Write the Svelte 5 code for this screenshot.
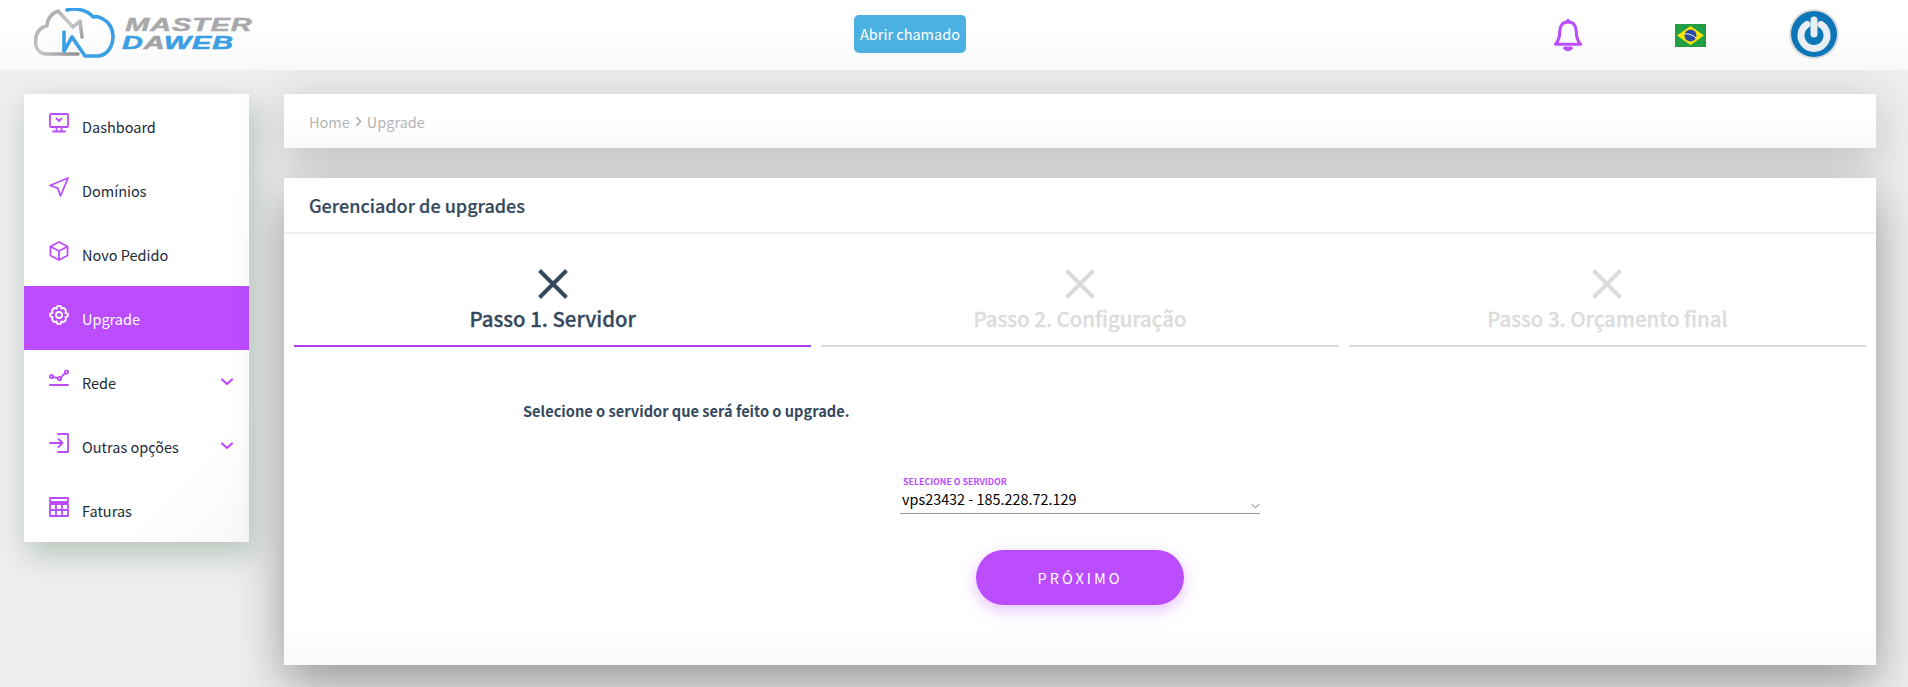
<script>
  const menu = [
    { label: 'Dashboard', icon: 'monitor' },
    { label: 'Domínios', icon: 'send' },
    { label: 'Novo Pedido', icon: 'box' },
    { label: 'Upgrade', icon: 'gear', active: true },
    { label: 'Rede', icon: 'chart', more: true },
    { label: 'Outras opções', icon: 'login', more: true },
    { label: 'Faturas', icon: 'table' }
  ];
  const steps = [
    { label: 'Passo 1. Servidor', active: true },
    { label: 'Passo 2. Configuração' },
    { label: 'Passo 3. Orçamento final' }
  ];
</script>

<div class="page">
  <header class="topbar">
    <div class="logo">
      <svg class="logo-mark" viewBox="0 0 85 52" width="85" height="52" fill="none" stroke-width="3.6" stroke-linecap="round" stroke-linejoin="round">
        <defs>
          <linearGradient id="metal" x1="0" y1="0" x2="1" y2="1">
            <stop offset="0" stop-color="#9d9da0" />
            <stop offset="0.5" stop-color="#c9c9cb" />
            <stop offset="1" stop-color="#8c8c8f" />
          </linearGradient>
        </defs>
        <path d="M44 46 L13 46 C5 46 1.5 40 1.5 33 C1.5 25 6 19 13 18 C13 11 18 5 24 3 L39 19 L46 13 L48 29" stroke="url(#metal)" />
        <path d="M33 2 C40 0 53 1 59 9 C63 8 66 9 69 11 C75 14 79 21 79 28 C79 38 74 47 64 48 L51 48 L38 29 L30 43 L30 24" stroke="#3a9fe4" />
      </svg>
      <div class="logo-text">
        <span class="logo-top">MASTER</span>
        <span class="logo-bottom">D<i>A</i>WEB</span>
      </div>
    </div>

    <button class="ticket">Abrir chamado</button>

    <svg class="bell" viewBox="0 0 30 34" width="30" height="33" fill="none" stroke="#bb4dff" stroke-width="3.2" stroke-linejoin="round" stroke-linecap="round">
      <path d="M15 3 C9 3 6.5 8 6.5 13 C6.5 19 5 23 2 26 L28 26 C25 23 23.5 19 23.5 13 C23.5 8 21 3 15 3 Z" />
      <path d="M15 1.5 L15 3" />
      <path d="M11.5 30 C13 32 17 32 18.5 30 Z" fill="#bb4dff" />
    </svg>

    <svg class="flag" viewBox="0 0 31 23" width="31" height="23">
      <rect width="31" height="23" fill="#229e45" />
      <path d="M15.5 2 L29 11.5 L15.5 21 L2 11.5 Z" fill="#f8e509" />
      <circle cx="15.5" cy="11.5" r="6" fill="#2b49a3" />
      <path d="M9.8 10 C14 9.5 18 11 21 14" stroke="#fff" stroke-width="0.9" fill="none" />
    </svg>

    <div class="avatar">
      <svg viewBox="0 0 50 50" width="50" height="50" fill="none">
        <circle cx="25" cy="25" r="25" fill="#dcdcdc" />
        <circle cx="25" cy="25" r="23" fill="#0d76b8" />
        <path d="M18 15.5 A13 13 0 1 0 32 15.5" stroke="#e9eef2" stroke-width="7" stroke-linecap="round" />
        <path d="M25 11 L25 25" stroke="#e9eef2" stroke-width="7" stroke-linecap="round" />
      </svg>
    </div>
  </header>

  <div class="layout">
    <nav class="sidebar">
      {#each menu as item}
        <a class="item" class:active={item.active} href="#top">
          <svg class="icon" viewBox="0 0 20 20" width="20" height="20" fill="none" stroke="currentColor" stroke-width="1.8" stroke-linejoin="round" stroke-linecap="round">
            {#if item.icon === 'monitor'}
              <rect x="1" y="1" width="18" height="13" rx="1" />
              <path d="M7.5 5.5 L10 8 L12.5 5.5 M7.5 14 V18 M12.5 14 V18 M4 18.5 H16" />
            {:else if item.icon === 'send'}
              <path d="M19 1 L1 8.5 L8.8 11.2 L11.5 19 Z" />
            {:else if item.icon === 'box'}
              <path d="M10 1 L18.5 5.5 V14.5 L10 19 L1.5 14.5 V5.5 Z M1.5 5.5 L10 10 L18.5 5.5 M10 10 V19" />
            {:else if item.icon === 'gear'}
              <path d="M8.2 1.2 H11.8 L12.4 3.6 L14.8 2.8 L17 5.4 L16.4 7.8 L18.8 8.6 V11.4 L16.4 12.2 L17 14.6 L14.8 17.2 L12.4 16.4 L11.8 18.8 H8.2 L7.6 16.4 L5.2 17.2 L3 14.6 L3.6 12.2 L1.2 11.4 V8.6 L3.6 7.8 L3 5.4 L5.2 2.8 L7.6 3.6 Z" />
              <circle cx="10" cy="10" r="3" />
            {:else if item.icon === 'chart'}
              <circle cx="2.5" cy="7.5" r="1.7" />
              <circle cx="10.5" cy="9.5" r="1.7" />
              <circle cx="17.5" cy="3" r="1.7" />
              <path d="M4.2 8 L8.8 9.1 M12 8.4 L16.2 4.2 M1 16 H19" />
            {:else if item.icon === 'login'}
              <path d="M9 1 H19 V19 H9 M1 10 H13 M9.5 6 L13.5 10 L9.5 14" />
            {:else}
              <path d="M1 1 H19 V5 H1 Z M1 7 H19 V19 H1 Z M1 13 H19 M7 7 V19 M13 7 V19" />
            {/if}
          </svg>
          <span class="label">{item.label}</span>
          {#if item.more}
            <svg class="chev" viewBox="0 0 12 8" width="12" height="8" fill="none" stroke="#bb4dff" stroke-width="2.2" stroke-linecap="round" stroke-linejoin="round">
              <path d="M1 1.5 L6 6 L11 1.5" />
            </svg>
          {/if}
        </a>
      {/each}
    </nav>

    <main class="content">
      <div class="crumbs">
        <span>Home</span>
        <svg viewBox="0 0 8 12" width="7" height="11" fill="none" stroke="#9a9a9a" stroke-width="1.4"><path d="M1.5 1 L6.5 6 L1.5 11" /></svg>
        <span>Upgrade</span>
      </div>

      <section class="card">
        <h2 class="card-title">Gerenciador de upgrades</h2>

        <div class="steps">
          {#each steps as step}
            <div class="step" class:current={step.active}>
              <svg viewBox="0 0 30 30" width="30" height="30" fill="none" stroke="currentColor" stroke-width="4">
                <path d="M1.5 1.5 L28.5 28.5 M28.5 1.5 L1.5 28.5" />
              </svg>
              <span class="step-label">{step.label}</span>
            </div>
          {/each}
        </div>

        <p class="hint">Selecione o servidor que será feito o upgrade.</p>

        <div class="field">
          <span class="field-label">SELECIONE O SERVIDOR</span>
          <div class="select">
            <span>vps23432 - 185.228.72.129</span>
            <svg viewBox="0 0 10 6" width="9" height="6" fill="none" stroke="#666" stroke-width="1"><path d="M1 1 L5 5 L9 1" /></svg>
          </div>
        </div>

        <button class="next">PRÓXIMO</button>
      </section>
    </main>
  </div>
</div>

<style>
  :global(body) {
    margin: 0;
    background: #eeeeee;
    overflow: hidden;
  }

  .page {
    height: 687px;
    overflow: hidden;
    font-family: "Noto Sans CJK SC", "Noto Sans", sans-serif;
    color: #2c3e50;
  }

  .topbar {
    position: relative;
    z-index: 2;
    height: 70px;
    display: flex;
    align-items: center;
    background: linear-gradient(180deg, #ffffff 35%, #f9f9f9 100%);
  }

  .logo {
    width: 854px;
    box-sizing: border-box;
    padding-left: 34px;
    display: flex;
    align-items: center;
    gap: 3px;
    flex: none;
    margin-top: -2px;
  }

  .logo-text {
    display: flex;
    flex-direction: column;
    width: 130px;
    font-family: "Liberation Sans", sans-serif;
    font-weight: 700;
    font-style: italic;
    font-size: 18px;
    line-height: 18px;
    letter-spacing: 0.6px;
    -webkit-text-stroke: 0.5px currentColor;
    transform: scaleX(1.6);
    transform-origin: left center;
  }

  .logo-top { color: #a9a9ac; padding-left: 2px; }
  .logo-bottom { color: #3a9fe4; }
  .logo-bottom i { color: #a2a2a5; }

  .ticket {
    flex: none;
    width: 112px;
    height: 38px;
    margin-top: -2px;
    padding: 0;
    border: none;
    border-radius: 5px;
    background: #4bb1e3;
    color: #fff;
    font: 400 14.5px/36px "Noto Sans CJK SC", sans-serif;
  }

  .bell {
    flex: none;
    margin-left: 587px;
    margin-top: 1px;
  }

  .flag {
    flex: none;
    margin-left: 92px;
  }

  .avatar {
    flex: none;
    margin-left: 83px;
    height: 50px;
    margin-top: -3px;
  }

  .layout {
    display: grid;
    grid-template-columns: 225px 1592px;
    column-gap: 35px;
    padding: 24px 0 0 24px;
  }

  .sidebar {
    align-self: start;
    background: linear-gradient(135deg, #ffffff 80%, #f8f8f8 100%);
    box-shadow: 4px 12px 28px rgba(50, 100, 65, 0.3);
  }

  .item {
    height: 64px;
    display: flex;
    align-items: center;
    padding: 0 16px 0 25px;
    color: #212b36;
    text-decoration: none;
    font-size: 14.5px;
    line-height: 20px;
  }

  .item .icon { color: #bb4dff; flex: none; margin-top: -6px; }
  .item .label { margin-left: 13px; flex: 1; padding-top: 2px; }
  .item .chev { flex: none; }
  .item.active { background: #bb4dff; color: #fff; }
  .item.active .icon { color: #fff; }

  .content {
    display: flex;
    flex-direction: column;
    gap: 30px;
  }

  .crumbs {
    height: 54px;
    padding-left: 25px;
    display: flex;
    align-items: center;
    gap: 5px;
    background: linear-gradient(180deg, #ffffff 50%, #f9f9f9 100%);
    color: #b5b5b5;
    font-size: 14.5px;
    box-shadow: 0 12px 50px rgba(0, 0, 0, 0.22);
  }

  .card {
    height: 487px;
    background: linear-gradient(180deg, #ffffff 92%, #f9f9f9 100%);
    box-shadow: 0 18px 45px rgba(0, 0, 0, 0.36);
    display: flex;
    flex-direction: column;
  }

  .card-title {
    margin: 0;
    height: 56px;
    padding: 0 25px;
    box-sizing: border-box;
    border-bottom: 2px solid #eeeeee;
    font-size: 18px;
    line-height: 54px;
    font-weight: 500;
    -webkit-text-stroke: 0.2px currentColor;
    color: #34495e;
  }

  .steps {
    display: grid;
    grid-template-columns: repeat(3, 1fr);
    column-gap: 10px;
    padding: 0 10px;
    margin-top: 35px;
  }

  .step {
    display: flex;
    flex-direction: column;
    align-items: center;
    color: #dcdcdc;
    border-bottom: 2px solid #d8d8d8;
    height: 76px;
  }

  .step.current {
    color: #34495e;
    border-bottom-color: #b53df0;
  }

  .step-label {
    font-size: 20.4px;
    line-height: 30px;
    font-weight: 500;
    -webkit-text-stroke: 0.3px currentColor;
    margin-top: 4px;
  }

  .hint {
    margin: 52px 0 0 239px;
    font-size: 14.6px;
    line-height: 24px;
    font-weight: 700;
    color: #34495e;
  }

  .field {
    align-self: flex-start;
    width: 360px;
    margin: 52px 0 0 616px;
    border-bottom: 1px solid #999;
  }

  .field-label {
    display: block;
    padding-left: 3px;
    font-size: 8.8px;
    line-height: 13px;
    font-weight: 700;
    color: #bb4dff;
  }

  .select {
    display: flex;
    justify-content: space-between;
    align-items: flex-end;
    padding: 0 0 3px 2px;
    font-size: 14.4px;
    line-height: 22px;
    color: #000;
  }

  .select svg { margin-bottom: 1px; }

  .next {
    align-self: flex-start;
    width: 208px;
    height: 55px;
    margin: 36px 0 0 692px;
    padding: 0;
    border: none;
    border-radius: 28px;
    background: #bb4dff;
    color: #fff;
    font: 400 14.5px/53px "Noto Sans CJK SC", sans-serif;
    letter-spacing: 3px;
    box-shadow: 0 5px 15px rgba(187, 77, 255, 0.35);
  }
</style>
